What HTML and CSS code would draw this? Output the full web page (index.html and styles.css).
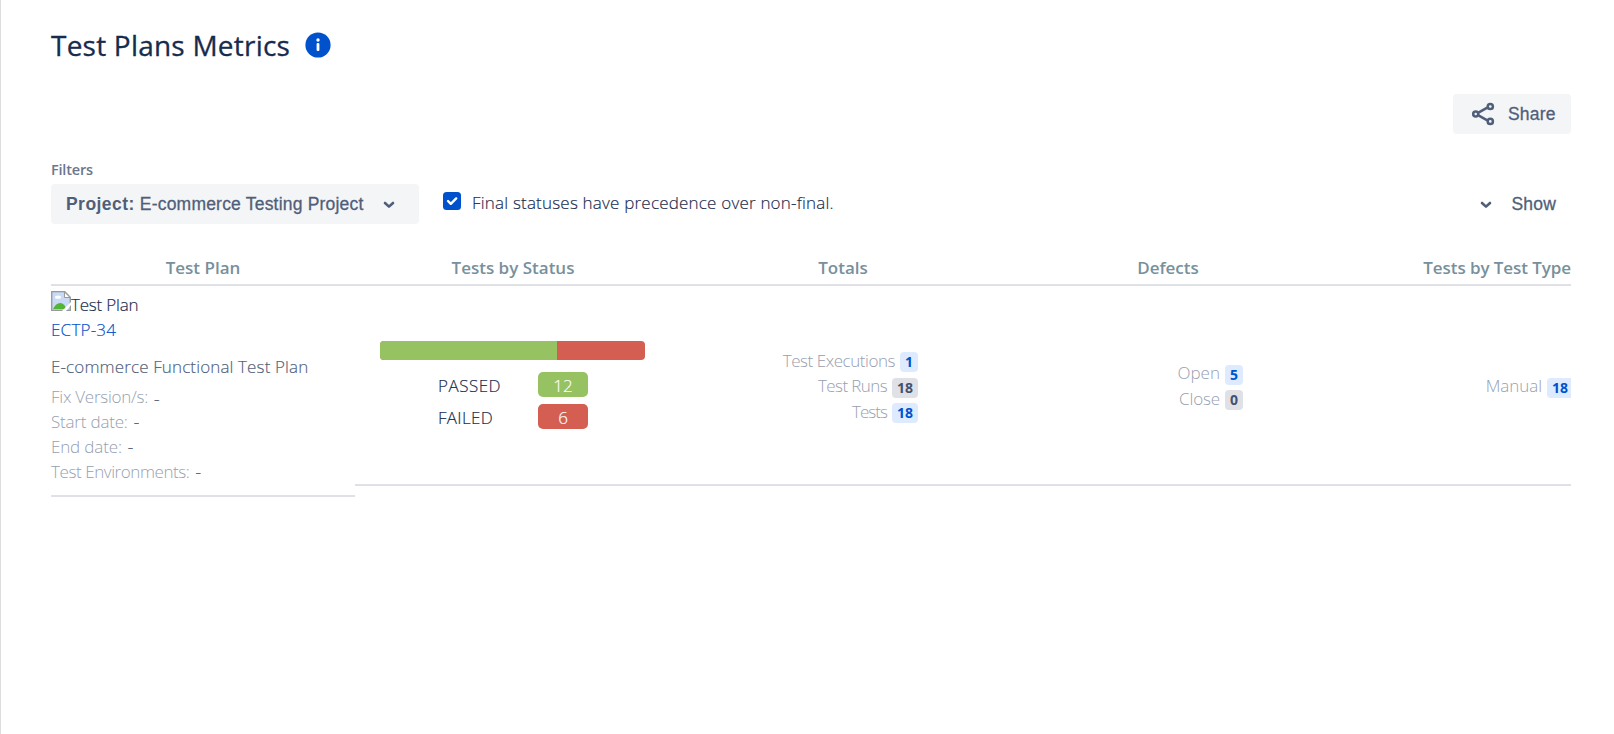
FILE: index.html
```html
<!DOCTYPE html>
<html lang="en">
<head>
<meta charset="utf-8">
<title>Test Plans Metrics</title>
<link rel="stylesheet" href="styles.css">
</head>
<body>
<main class="page">
  <header class="title-row">
    <h1 class="title">Test Plans Metrics</h1>
    <svg class="info" viewBox="0 0 26 26"><circle cx="13" cy="13" r="12.6" fill="#0052cc"/><circle cx="13" cy="8" r="1.7" fill="#fff"/><rect x="11.6" y="11" width="2.8" height="8" rx="1" fill="#fff"/></svg>
  </header>
  <div class="actions">
    <button class="button share">
      <svg class="share-icon" viewBox="0 0 24 24" fill="none" stroke="#505f79" stroke-width="2.5"><path d="M7 10.8 16.3 5.6M7 13.2l9.3 5.2"/><circle cx="4.7" cy="12" r="2.5"/><circle cx="19.3" cy="4.5" r="2.6"/><circle cx="19.3" cy="19.4" r="2.6"/></svg>
      <span>Share</span>
    </button>
  </div>
  <div class="filters-label"><span class="t-filters">Filters</span></div>
  <div class="filters">
    <button class="button project"><span><b>Project:</b> E-commerce Testing Project</span>
      <svg class="chevron" viewBox="0 0 12 8"><path d="M2 2l4 3.6L10 2" fill="none" stroke="#505f79" stroke-width="2.6" stroke-linecap="round" stroke-linejoin="round"/></svg>
    </button>
    <label class="check">
      <svg class="box" viewBox="0 0 18 18"><rect width="18" height="18" rx="3.5" fill="#0052cc"/><path d="M5 9l2.8 2.8L13.2 6.4" fill="none" stroke="#fff" stroke-width="2.4" stroke-linecap="round" stroke-linejoin="round"/></svg>
      <span class="t-final">Final statuses have precedence over non-final.</span>
    </label>
    <button class="button show">
      <svg class="chevron" viewBox="0 0 12 8"><path d="M2 2l4 3.6L10 2" fill="none" stroke="#505f79" stroke-width="2.6" stroke-linecap="round" stroke-linejoin="round"/></svg>
      <span>Show</span>
    </button>
  </div>
  <section class="table">
    <div class="head grid">
      <div>Test Plan</div><div>Tests by Status</div><div>Totals</div><div>Defects</div><div class="last">Tests by Test Type</div>
    </div>
    <div class="row">
      <div class="plan">
        <div class="plan-type">
          <svg class="broken" viewBox="0 0 20 20"><path d="M.7.7h13.1l5.5 5.5v13.1H.7z" fill="#c3d6f5" stroke="#999" stroke-width="1.3"/><path d="M2 2h11v5h5v11H2z" fill="#c8daf6"/><path d="M13.5 1v5.5H19z" fill="#fff" stroke="#999"/><ellipse cx="7" cy="6.2" rx="3" ry="1.6" fill="#fff"/><path d="M2 18c3-7 9-8 12-3l1 3z" fill="#54b435"/><path d="M20 11v3l-5 6H11z" fill="#fff"/></svg><span class="t-type">Test Plan</span>
        </div>
        <div><a class="key">ECTP-34</a></div>
        <div class="summary">E-commerce Functional Test Plan</div>
        <div class="meta"><span class="t-fix">Fix Version/s:</span><i class="dash low">-</i></div>
        <div class="meta"><span class="t-start">Start date:</span><i class="dash">-</i></div>
        <div class="meta"><span class="t-end">End date:</span><i class="dash">-</i></div>
        <div class="meta"><span class="t-env">Test Environments:</span><i class="dash">-</i></div>
      </div>
      <div class="metrics">
        <div class="status">
          <div class="bar"><div class="bar-pass"></div></div>
          <div class="status-row"><span class="name t-pass">PASSED</span><span class="count pass">12</span></div>
          <div class="status-row"><span class="name t-fail">FAILED</span><span class="count fail">6</span></div>
        </div>
        <div class="list totals">
          <div class="item"><span class="t-exec">Test Executions</span><b class="badge high">1</b></div>
          <div class="item"><span class="t-runs">Test Runs</span><b class="badge grey">18</b></div>
          <div class="item"><span class="t-tests">Tests</span><b class="badge high">18</b></div>
        </div>
        <div class="list defects">
          <div class="item wide"><span>Open</span><b class="badge">5</b></div>
          <div class="item"><span class="t-close">Close</span><b class="badge high grey">0</b></div>
        </div>
        <div class="list types">
          <div class="item"><span class="t-manual">Manual</span><b class="badge cut">18</b></div>
        </div>
      </div>
    </div>
  </section>
</main>
</body>
</html>
```
FILE: styles.css
```css
* { box-sizing: border-box; }
body { margin: 0; background: #fff; color: #172b4d; font: 300 17px/25px "Open Sans", "Noto Sans", sans-serif; white-space: nowrap; }
svg { display: block; flex: none; }
.page { height: 734px; overflow: hidden; border-left: 1px solid #ddd; padding: 27px 43px 0 50px; }
.title-row { display: flex; align-items: center; height: 36px; }
.title { margin: 0; width: 254px; font-size: 28px; line-height: 36px; font-weight: 400; letter-spacing: .22px; -webkit-text-stroke: .3px #172b4d; }
.info { width: 26px; height: 26px; }
.actions { display: flex; justify-content: flex-end; margin-top: 31px; }
.button { display: flex; align-items: center; height: 40px; border: 0; border-radius: 4px; margin: 0; padding: 0; background: #f4f5f7; color: #505f79; font: 17.5px/25px "Liberation Sans", Arial, sans-serif; letter-spacing: .2px; -webkit-text-stroke: .3px #505f79; }
.share { width: 118px; padding-left: 18px; gap: 13px; }
.share-icon { width: 24px; height: 24px; }
.filters-label { height: 20px; margin-top: 26px; font-size: 14.5px; line-height: 20px; font-weight: 600; color: #6b778c; }
.t-filters { letter-spacing: -.2px; }
.filters { display: flex; align-items: center; height: 40px; margin-top: 4px; }
.project { width: 368px; padding: 0 24px 0 15px; justify-content: space-between; }
.project b { -webkit-text-stroke: 0; letter-spacing: .45px; }
.chevron { width: 12px; height: 8px; margin-top: 1px; }
.check { display: flex; margin: -4px 0 0 24px; gap: 11px; }
.box { width: 18px; height: 18px; margin-top: 2px; }
.t-final { letter-spacing: .2px; -webkit-text-stroke: .15px #172b4d; }
.show { background: none; margin-left: auto; padding-right: 15px; gap: 19px; }
.table { margin-top: 31px; }
.grid { display: grid; grid-template-columns: 304px 316px 344px 306px 250px; text-align: center; }
.head { height: 31px; border-bottom: 2px solid #dfe1e6; color: #78909c; font-weight: 600; }
.last { text-align: right; letter-spacing: -.08px; }
.row { display: flex; align-items: flex-start; }
.plan { width: 304px; height: 211px; padding-top: 6px; border-bottom: 2px solid #dfe1e6; }
.plan-type { display: flex; }
.t-type { letter-spacing: -.2px; -webkit-text-stroke: .15px #172b4d; }
.broken { width: 20px; height: 20px; margin-top: -1px; }
.key { color: #0052cc; letter-spacing: .22px; -webkit-text-stroke: .15px #0052cc; }
.summary { margin: 12px 0 5px; color: #505f79; letter-spacing: .13px; -webkit-text-stroke: .15px #505f79; }
.meta { display: flex; color: #97a0af; }
.dash { margin-left: 6px; color: #505f79; font-style: normal; -webkit-text-stroke: .3px #505f79; }
.low { margin-top: 2px; height: 23px; }
.t-fix { letter-spacing: -.25px; }
.t-start { letter-spacing: -.2px; }
.t-end { letter-spacing: -.15px; }
.t-env { letter-spacing: -.42px; }
.metrics { display: flex; width: 1216px; height: 200px; border-bottom: 2px solid #dfe1e6; }
.status { width: 290px; padding: 55px 0 0 25px; }
.bar { width: 265px; height: 19px; border-radius: 4px; overflow: hidden; background: #d35e51; margin-bottom: 12px; }
.bar-pass { width: 177px; height: 19px; background: #97c262; }
.status-row { display: flex; margin: 0 0 7px 58px; }
.name { width: 100px; height: 25px; padding-top: 1px; -webkit-text-stroke: .15px #172b4d; }
.t-pass { letter-spacing: .5px; }
.t-fail { letter-spacing: .3px; }
.count { width: 50px; height: 25px; padding-top: 1px; border-radius: 5px; text-align: center; color: #fff; -webkit-text-stroke: .15px #fff; }
.pass { background: #97c262; }
.fail { background: #d35e51; }
.list { color: #97a0af; }
.totals { width: 273px; padding-top: 62px; }
.defects { width: 325px; padding-top: 74px; }
.types { width: 328px; padding-top: 87px; }
.item { display: flex; justify-content: flex-end; height: 25.4px; }
.wide { height: 26px; }
.badge { height: 20px; margin: 5px 0 0 5px; padding: 0 5px; border-radius: 4px; background: #deebff; color: #0052cc; font-size: 14px; line-height: 20px; font-weight: 700; text-align: center; min-width: 18px; }
.high { margin-top: 4px; }
.grey { background: #dfe1e6; color: #42526e; }
.cut { border-radius: 4px 0 0 4px; padding-right: 3px; }
.t-exec { letter-spacing: -.45px; }
.t-runs { letter-spacing: -.6px; }
.t-tests { letter-spacing: -.95px; }
.t-close { letter-spacing: -.15px; }
.t-manual { letter-spacing: -.05px; }
```
